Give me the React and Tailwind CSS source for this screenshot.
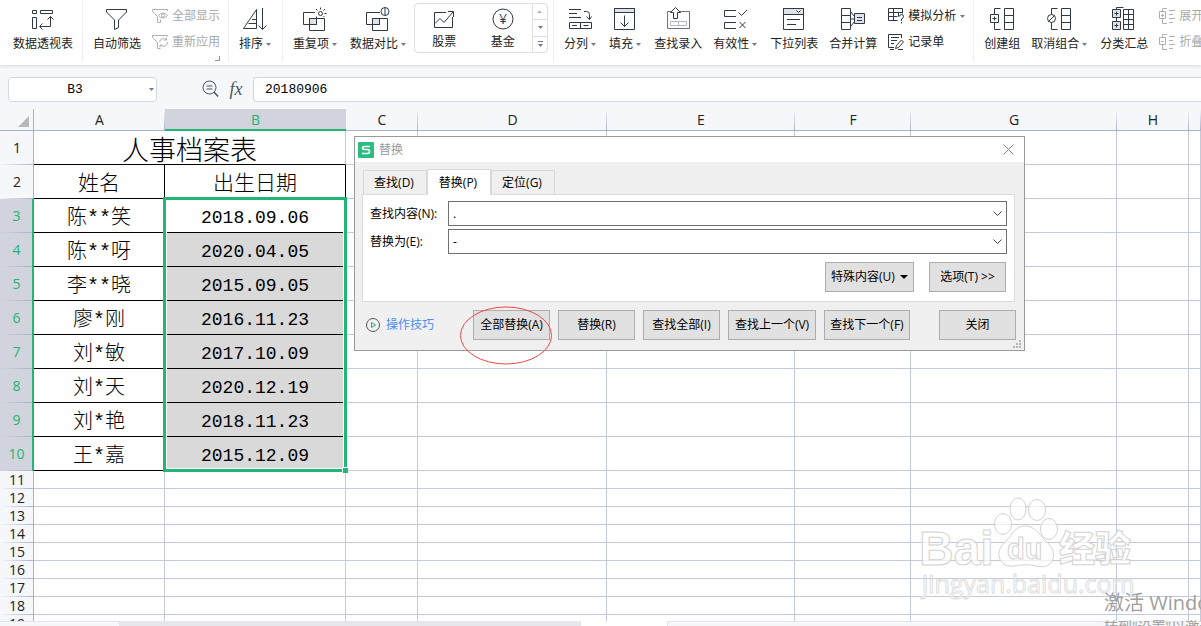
import React, { useState } from 'react';
import { clsx } from 'clsx';

const names = ["陈**笑", "陈**呀", "李**晓", "廖*刚", "刘*敏", "刘*天", "刘*艳", "王*嘉"]
const dates = ["2018.09.06", "2020.04.05", "2015.09.05", "2016.11.23", "2017.10.09", "2020.12.19", "2018.11.23", "2015.12.09"]
const smallRows = [11, 12, 13, 14, 15, 16, 17, 18, 19]
const columns = ["A", "B", "C", "D", "E", "F", "G", "H", ""]

// Icons

const Icon = ({ children, className }) => (
  <svg viewBox="0 0 24 24" className={clsx("h-6 w-6 shrink-0 fill-none stroke-[#2f3847]", className)} aria-hidden="true">{children}</svg>
)

const SmallIcon = ({ children, muted }) => (
  <svg viewBox="0 0 16 16" className={clsx("h-4 w-4 shrink-0 fill-none", muted ? "stroke-[#b0b0b0]" : "stroke-[#2f3847]")} aria-hidden="true">{children}</svg>
)

const Caret = () => (
  <svg viewBox="0 0 5 3" className="h-[3px] w-[5px] shrink-0 fill-[#6f7c98]" aria-hidden="true"><path d="M0 0h5L2.5 3z" /></svg>
)

const PivotIcon = () => (
  <Icon>
    <path d="M1.5 3.5h4v3h-4zM9.5 3.5h12v3h-12zM1.5 10.5h4v11h-4z" />
    <path d="M19.5 9.5v10H9M16.5 12.5l3-3 3 3M11.5 16.5l-3 3 3 3" />
  </Icon>
)

const FilterIcon = () => (
  <Icon><path d="M1.5 2.5h20V5l-8 8v7.5l-4 2V13l-8-8z" /></Icon>
)

const ShowAllIcon = () => (
  <SmallIcon muted>
    <path d="M15.5 3V1.5H.5v2l5 5v6h3v-3" />
    <path d="M6.500 7.500Q11 2.500 15.500 7.500Q11 12.500 6.500 7.500z" />
    <circle cx="11" cy="7.500" r="1.500" />
  </SmallIcon>
)

const ReapplyIcon = () => (
  <SmallIcon muted>
    <path d="M15.500 2.500v-1H.5v2l5 5v6h3" />
    <path d="M7.500 8a4 4 0 0 1 7-2M14.500 3.500V6H12M15.500 8a4 4 0 0 1-7 3M8 13.500V11h2.500" />
  </SmallIcon>
)

const SortIcon = () => (
  <Icon><path d="M13.500 2.500v19H.5zM9 12.500h4.500M5.500 16.500h8M19.500 1v21.500M15.500 18.500l4 4 4-4" /></Icon>
)

const DuplicateIcon = () => (
  <Icon>
    <path d="M6.500 11.500h7v6h-7z" className="fill-[#dfe2e7]" />
    <path d="M12 5.500H.5v12h13V9.500" />
    <path d="M16 11.500H6.500v12h15v-12z" />
    <circle cx="17.500" cy="6.500" r="2" />
    <path d="M17.500 2.500V.5M21.500 6.500h2M20.500 3.500l1.500-1.500M14.500 3.500L13 2M20.500 9l1 1" />
  </Icon>
)

const CompareIcon = () => (
  <Icon>
    <path d="M6.500 11.500h7v6h-7z" className="fill-[#dfe2e7]" />
    <path d="M14 5.500H.5v12h13v-6" />
    <path d="M6.500 11.500h15v12h-15z" />
    <circle cx="19" cy="4.500" r="4" /><path d="M19 .5v8" />
  </Icon>
)

const StockIcon = () => (
  <Icon><path d="M14 6.500H2.500v15h18V11M3 17.500l5-5 4 4L21 6M16 5.500h5.500V11" /></Icon>
)

const FundIcon = () => (
  <Icon>
    <circle cx="12" cy="13" r="10" />
    <text x="12" y="18" textAnchor="middle" className="fill-[#2f3847] stroke-none font-['Open_Sans',sans-serif] text-sm">¥</text>
  </Icon>
)

const SplitIcon = () => (
  <Icon>
    <path d="M1 2.500h12M1 6.500h8M1 10.500h12M16 4.500h2.500q3 0 3 3v5M18.500 9.500l3 3 2-3" />
    <path d="M1.500 15.500h22v6h-22zM12.500 15.500v6M4 18.500h5M15.500 18.500h5" />
  </Icon>
)

const FillIcon = () => (
  <Icon>
    <path d="M1.500 1.500h20v4h-20z" className="fill-[#dfe2e7]" />
    <path d="M1.500 1.500h20v21h-20zM11.500 8.500v11M7.500 15.500l4 4 4-4" />
  </Icon>
)

const LookupIcon = () => (
  <Icon className="stroke-[#6b7280]">
    <path d="M5 4.500H1.500v17h22v-17H14" />
    <path d="M4.500 14.500h16v4h-16zM12.500 14.500v4" className="stroke-[#b4b8c0]" />
    <path d="M7.500 11.500v-6h-3l5-5 5 5h-3v6z" className="fill-white stroke-[#2f3847]" />
  </Icon>
)

const ValidIcon = () => (
  <Icon><path d="M13 3.500H1.500v6H13M13 15.500H1.500v6H13M15.500 5.500l3 3 5.500-5.500M16.500 15l6 6M22.500 15l-6 6" /></Icon>
)

const DropListIcon = () => (
  <Icon>
    <path d="M1.500 1.500h20v6h-20z" className="fill-[#dfe2e7]" />
    <path d="M1.500 1.500h20v21h-20zM14.500 3.500l2 2 2-2M5 12.500h13M5 17.500h9" />
  </Icon>
)

const MergeIcon = () => (
  <Icon>
    <path d="M.5 1.500h9v21h-9zM.5 8.500h9M.5 15.500h9M9.500 4.500l4 5M9.500 12h4M9.500 19.500l4-5" />
    <path d="M13.500 6.500h10v10h-10z" className="fill-[#dfe2e7]" />
    <path d="M16 10.500h5M16 13.500h5" />
  </Icon>
)

const WhatIfIcon = () => (
  <SmallIcon>
    <path d="M9.500 12.500H.5V.5h14v5M.5 4.500h14M.5 8.500h9M5.500.5v12M10.500 4.500v4" />
    <path d="M11.500 8.500q0-2 2-2t2 2q0 1.500-2 2.500v2M13.500 14v1.500" />
  </SmallIcon>
)

const RecordIcon = () => (
  <SmallIcon>
    <path d="M13.500 4V.5H.5v13H6M3 3.500h8M3 6.500h6M3 9.500h3M2 15.500h4" />
    <path d="M7.500 14.500l1-3 5-5.500 2 2-5 5.500zM10 15.500h5" />
  </SmallIcon>
)

const GroupIcon = () => (
  <Icon>
    <path d="M10.500 1.500h-6v6M4.500 15.500v7h6M.5 7.500h8v8h-8zM2.500 11.500h4M4.500 9.500v4" />
    <path d="M14.500 1.500h9v21h-9zM14.500 8.500h9M14.500 15.500h9" />
  </Icon>
)

const UngroupIcon = () => (
  <Icon>
    <path d="M10.500 1.500h-6v6M4.500 15.500v7h6M1.500 14.500l6-6" />
    <circle cx="4.500" cy="11.500" r="4" />
    <path d="M14.500 1.500h9v21h-9zM14.500 8.500h9M14.500 15.500h9" />
  </Icon>
)

const SubtotalIcon = () => (
  <Icon>
    <path d="M4.500 2.500v-2h7M4.500 10.500v4" />
    <path d="M.5 2.500h8v8h-8zM.5 14.500h8v8h-8z" className="fill-[#dfe2e7]" />
    <path d="M2.500 6.500h4M4.500 4.500v4M2.500 18.500h4M4.500 16.500v4" />
    <path d="M11.500 2.500h10v20h-10zM16.500 2.500v20M11.500 7.500h10M11.500 12.500h10M11.500 17.500h10" />
  </Icon>
)

const OutlineIcon = ({ plus }) => (
  <SmallIcon muted>
    <path d="M8 .5H3.500v3M3.500 10.500v5H8M.5 3.500h6v7h-6zM2 7.500h3M10 2.500h6M10 6.500h4M10 10.500h6M10 14.500h4" />
    {plus && <path d="M3.500 6v3" />}
  </SmallIcon>
)

// Ribbon

const Group = ({ children }) => (
  <div className="flex shrink-0 border-r border-[#eceef1] pr-[3px] pl-[5px] first:pl-2 last:border-r-0">{children}</div>
)

const BigButton = ({ icon, label, caret }) => (
  <button type="button" className={clsx("flex shrink-0 flex-col items-center pt-1.5 pl-[5px]", caret ? "pr-2" : "pr-1.5")}>
    {icon}
    <span className="mt-[5px] flex items-center gap-[3px] leading-4 whitespace-nowrap">{label}{caret && <Caret />}</span>
  </button>
)

const RowButton = ({ icon, label, caret, muted }) => (
  <button type="button" className={clsx("flex items-center gap-1 leading-4 whitespace-nowrap", muted && "text-[#a9a9a9]")}>
    {icon}{label}{caret && <Caret />}
  </button>
)

const Ribbon = () => (
  <header className="flex h-[65px] shrink-0 overflow-hidden bg-white shadow-[0_1px_3px_#d5d8dd]">
    <div className="flex h-[62px] pt-px">
      <Group><BigButton icon={<PivotIcon />} label="数据透视表" /></Group>
      <Group>
        <BigButton icon={<FilterIcon />} label="自动筛选" />
        <div className="flex flex-col gap-2.5 px-[5px] pt-[7px]">
          <RowButton muted icon={<ShowAllIcon />} label="全部显示" />
          <RowButton muted icon={<ReapplyIcon />} label="重新应用" />
          <span className="-mt-1 h-[5px] w-[5px] self-end border-r border-b border-[#8a94a8]"></span>
        </div>
      </Group>
      <Group><BigButton icon={<SortIcon />} label="排序" caret /></Group>
      <Group>
        <BigButton icon={<DuplicateIcon />} label="重复项" caret />
        <BigButton icon={<CompareIcon />} label="数据对比" caret />
        <div className="mt-0.5 mr-0.5 flex h-[50px] w-[134px] rounded-sm border border-[#dcdfe4]">
          <button type="button" className="flex flex-1 flex-col items-center pt-0.5"><StockIcon /><span className="mt-1 leading-4">股票</span></button>
          <button type="button" className="flex flex-1 flex-col items-center pt-0.5"><FundIcon /><span className="mt-1 leading-4">基金</span></button>
          <div className="flex w-[15px] flex-col border-l border-[#dcdfe4]">
            <button type="button" aria-label="上一行" className="flex flex-1 rotate-180 items-center justify-center opacity-60"><Caret /></button>
            <button type="button" aria-label="下一行" className="flex flex-1 items-center justify-center border-y border-[#dcdfe4]"><Caret /></button>
            <button type="button" aria-label="更多" className="flex flex-1 flex-col items-center justify-center gap-0.5"><span className="h-px w-[5px] bg-[#6f7c98]"></span><Caret /></button>
          </div>
        </div>
      </Group>
      <Group>
        <BigButton icon={<SplitIcon />} label="分列" caret />
        <BigButton icon={<FillIcon />} label="填充" caret />
        <BigButton icon={<LookupIcon />} label="查找录入" />
        <BigButton icon={<ValidIcon />} label="有效性" caret />
        <BigButton icon={<DropListIcon />} label="下拉列表" />
        <BigButton icon={<MergeIcon />} label="合并计算" />
        <div className="flex flex-col gap-2.5 px-[5px] pt-[7px]">
          <RowButton icon={<WhatIfIcon />} label="模拟分析" caret />
          <RowButton icon={<RecordIcon />} label="记录单" />
        </div>
      </Group>
      <Group>
        <BigButton icon={<GroupIcon />} label="创建组" />
        <BigButton icon={<UngroupIcon />} label="取消组合" caret />
        <BigButton icon={<SubtotalIcon />} label="分类汇总" />
        <div className="flex flex-col gap-2.5 px-[5px] pt-[7px]">
          <RowButton muted icon={<OutlineIcon plus />} label="展开" />
          <RowButton muted icon={<OutlineIcon />} label="折叠" />
        </div>
      </Group>
    </div>
  </header>
)

const FormulaBar = () => {
  const [formula, setformula] = useState("20180906")
  return (
    <div className="flex h-11 shrink-0 items-center pt-1 pl-2">
      <div className="flex h-[25px] w-[149px] items-center rounded-sm border border-[#d5d8de] bg-white pr-0.5">
        <input aria-label="名称框" defaultValue="B3" className="w-0 flex-1 bg-transparent pt-0.5 pr-2 text-center font-['Liberation_Mono',monospace] text-[13px] text-black outline-none" />
        <Caret />
      </div>
      <svg viewBox="0 0 18 18" className="ml-11 h-[18px] w-[18px] shrink-0 fill-none stroke-[#4b5563]" aria-hidden="true">
        <circle cx="8.500" cy="7.500" r="6.500" /><path d="M5.500 6h6M5.500 9h6" /><path d="M13 12l4 4.500" strokeWidth="1.500" />
      </svg>
      <button type="button" className="w-[34px] text-center font-['Liberation_Serif',serif] text-lg leading-5 text-[#4b5563] italic">fx</button>
      <input aria-label="编辑栏" value={formula} onChange={(e) => setformula(e.target.value)} className="h-[25px] min-w-0 flex-1 rounded-l-sm border border-r-0 border-[#d5d8de] bg-white pl-[11px] font-['Liberation_Mono',monospace] text-[13px] text-black outline-none" />
    </div>
  )
}

// Sheet

const rowHead = "bg-[linear-gradient(to_right,transparent,#a9b2cc)] bg-[length:100%_1px] bg-bottom bg-no-repeat pl-px text-center font-['Open_Sans',sans-serif] text-sm leading-4 font-normal"

const RowHead = ({ n, selected }) => (
  <th scope="row" className={clsx(rowHead, selected ? "border-r-2 border-[#22b573] bg-[#d1d4dc] text-[#22b573]" : "border-r border-[#a9b2cc] bg-[#f5f7fa] text-[#222]")}>{n}</th>
)

const EmptyCells = ({ count }) => Array.from({ length: count }, (_, i) => (
  <td key={i} className="border-r border-b border-[#c3cadd]"></td>
))

const Sheet = () => (
  <table className="w-full table-fixed border-separate border-spacing-0 text-black">
    <colgroup>
      <col className="w-[34px]" />
      <col className="w-[131px]" />
      <col className="w-[181px]" />
      <col className="w-[72px]" />
      <col className="w-[189px]" />
      <col className="w-[188px]" />
      <col className="w-[116px]" />
      <col className="w-[206px]" />
      <col className="w-[72px]" />
      <col />
    </colgroup>
    <thead>
      <tr className="h-[22px] bg-[#f5f7fa] font-['Open_Sans',sans-serif] text-sm leading-4 text-[#222]">
        <td className="border-r border-b border-[#a9b2cc] pr-1">
          <svg viewBox="0 0 11 11" className="mt-1 ml-auto h-[11px] w-[11px] fill-[#b8b8b8]" aria-hidden="true"><path d="M11 0v11H0z" /></svg>
        </td>
        {columns.map((c) => (
          <th key={c} scope="col" className={clsx("font-normal", c === "B" ? "border-b-2 border-[#22b573] bg-[#d1d4dc] pt-px text-[#22b573]" : "border-b border-[#a9b2cc] bg-[linear-gradient(transparent,#a9b2cc)] bg-[length:1px_100%] bg-right bg-no-repeat")}>{c}</th>
        ))}
      </tr>
    </thead>
    <tbody>
      <tr className="h-[34px]">
        <RowHead n={1} />
        <td colSpan={2} className="border-r border-b border-r-[#c3cadd] border-b-black pt-1 text-center text-[27px] leading-7 font-light">人事档案表</td>
        <EmptyCells count={7} />
      </tr>
      <tr className="h-[34px]">
        <RowHead n={2} />
        <td className="border-r border-b border-black text-center text-[21px] leading-6 font-light">姓名</td>
        <td className="border-r border-b border-black text-center text-[21px] leading-6 font-light">出生日期</td>
        <EmptyCells count={7} />
      </tr>
      {names.map((name, i) => (
        <tr key={name} className="h-[34px]">
          <RowHead n={i + 3} selected />
          <td className="border-r border-b border-black pt-1.5 text-center font-['Liberation_Mono','Noto_Sans_CJK_SC',monospace] text-[20px] leading-6 font-light">{name}</td>
          <td className={clsx("border-r border-b border-black pt-1 text-center font-['Liberation_Mono',monospace] text-lg leading-6", i > 0 && "bg-[#d9d9d9]")}>{dates[i]}</td>
          <EmptyCells count={7} />
        </tr>
      ))}
      {smallRows.map((n) => (
        <tr key={n} className="h-[18px]">
          <RowHead n={n} />
          <EmptyCells count={9} />
        </tr>
      ))}
    </tbody>
  </table>
)

// Replace dialog

const DialogButton = ({ children, className }) => (
  <button type="button" className={clsx("flex h-[30px] shrink-0 items-center justify-center border border-[#adadad] bg-[#e1e1e1] whitespace-nowrap", className)}>{children}</button>
)

const Tab = ({ label, active, onClick }) => (
  <button type="button" role="tab" aria-selected={active} onClick={onClick} className={clsx("w-16 border border-[#d9d9d9] pr-0.5 text-center", active ? "z-10 -mb-px h-[26px] border-b-0 bg-white" : "h-6 border-b-0 bg-[#f0f0f0]")}>{label}</button>
)

const Field = ({ id, label, value, onChange }) => (
  <div className="flex items-center">
    <label htmlFor={id} className="w-[78px] shrink-0">{label}</label>
    <div className="flex h-[25px] flex-1 items-center border border-[#707070] bg-white">
      <input id={id} value={value} onChange={onChange} className="min-w-0 flex-1 px-1 outline-none" />
      <svg viewBox="0 0 9 5" className="mr-1 h-[5px] w-[9px] fill-none stroke-[#444]" aria-hidden="true"><path d="M.5 .5l4 4 4-4" /></svg>
    </div>
  </div>
)

const ReplaceDialog = () => {
  const [tab, settab] = useState("替换(P)")
  const [find, setfind] = useState(".")
  const [replace, setreplace] = useState("-")

  return (
    <section role="dialog" aria-label="替换" className="absolute top-[27px] left-[354px] z-20 w-[671px] border border-[#9a9a9a] bg-[#f0f0f0] text-black">
      <div className="flex h-[25px] items-center bg-white pr-2.5 pl-[3px]">
        <svg viewBox="0 0 16 16" className="h-4 w-4" aria-hidden="true">
          <rect width="16" height="16" rx="1" className="fill-[#2bbd80]" />
          <path d="M12 4.500H6.500q-2 0-2 1.500t2 1.500h3q2 0 2 2t-2 2H4" className="fill-none stroke-white" strokeWidth="1.500" />
        </svg>
        <h2 className="ml-[5px] flex-1 text-[#999]">替换</h2>
        <button type="button" aria-label="关闭窗口">
          <svg viewBox="0 0 11 11" className="h-[11px] w-[11px] stroke-[#888]" aria-hidden="true"><path d="M.5 .5l10 10M10.500 .5l-10 10" /></svg>
        </button>
      </div>
      <div className="pt-[7px] pr-[9px] pl-[7px]">
        <div role="tablist" className="flex items-end pl-px">
          {["查找(D)", "替换(P)", "定位(G)"].map((t) => (
            <Tab key={t} label={t} active={t === tab} onClick={() => settab(t)} />
          ))}
        </div>
        <div className="flex flex-col gap-[3px] border border-[#dcdcdc] bg-white pt-1.5 pr-[7px] pb-[9px] pl-[7px]">
          <Field id="find" label="查找内容(N):" value={find} onChange={(e) => setfind(e.target.value)} />
          <Field id="replace" label="替换为(E):" value={replace} onChange={(e) => setreplace(e.target.value)} />
          <div className="mt-[5px] flex justify-end gap-[15px] pr-px">
            <DialogButton className="w-[89px] gap-[5px]">特殊内容(U)<svg viewBox="0 0 8 4" className="h-1 w-2" aria-hidden="true"><path d="M0 0h8L4 4z" /></svg></DialogButton>
            <DialogButton className="w-[77px]">选项(T) &gt;&gt;</DialogButton>
          </div>
        </div>
      </div>
      <div className="flex items-center gap-2 pt-2 pr-2 pb-2.5 pl-[11px]">
        <a href="#tips" className="mr-auto flex items-center gap-1.5 text-[#4a90f0]">
          <svg viewBox="0 0 14 14" className="h-3.5 w-3.5 fill-none" aria-hidden="true">
            <circle cx="7" cy="7" r="6.500" className="stroke-[#555]" />
            <path d="M5.500 4.500v5l4-2.500z" className="stroke-[#22b573]" />
          </svg>
          操作技巧
        </a>
        <div className="relative">
          <DialogButton className="w-[77px]">全部替换(A)</DialogButton>
          <svg viewBox="0 0 92 59" className="pointer-events-none absolute -top-1 -left-[13px] h-[59px] w-[92px] max-w-none fill-none stroke-[#f04848]" aria-hidden="true"><ellipse cx="46" cy="29.500" rx="45.500" ry="28.500" /></svg>
        </div>
        <DialogButton className="w-[77px]">替换(R)</DialogButton>
        <DialogButton className="w-[77px]">查找全部(I)</DialogButton>
        <DialogButton className="w-[88px]">查找上一个(V)</DialogButton>
        <DialogButton className="w-[86px]">查找下一个(F)</DialogButton>
        <DialogButton className="ml-[21px] w-[77px]">关闭</DialogButton>
      </div>
      <svg viewBox="0 0 8 8" className="absolute right-[3px] bottom-0.5 h-2 w-2 fill-[#b5b5b5]" aria-hidden="true">
        <path d="M6 0h2v2H6zM3 3h2v2H3zM6 3h2v2H6zM0 6h2v2H0zM3 6h2v2H3zM6 6h2v2H6z" />
      </svg>
    </section>
  )
}

const Watermark = () => (
  <svg viewBox="0 0 230 115" className="pointer-events-none absolute right-14 bottom-[21px] h-[115px] w-[230px] fill-white/70 stroke-[#d2d2d2]" aria-hidden="true">
    <ellipse cx="103" cy="19" rx="8" ry="11" />
    <ellipse cx="122" cy="20" rx="8.500" ry="10.500" />
    <ellipse cx="88" cy="34" rx="8.500" ry="10.500" />
    <ellipse cx="134" cy="39" rx="8.500" ry="10.500" />
    <path d="M110 36c-10 0-12 8-18 14s-9 10-8 16c2 9 9 11 15 10s14-2 22 0c9 2 15 0 17-7c2-8-2-13-8-19s-10-14-20-14z" />
    <text x="4" y="75" className="font-['Liberation_Sans',sans-serif] text-[48px] font-bold">Bai</text>
    <text x="92" y="69" className="font-['Liberation_Sans',sans-serif] text-[29px] font-bold">du</text>
    <text x="144" y="72" className="font-['Noto_Sans_CJK_SC',sans-serif] text-[36px] font-black">经验</text>
    <text x="7" y="103" className="stroke-[#dedede] font-['Open_Sans',sans-serif] text-[25px]">jingyan.baidu.com</text>
  </svg>
)

const App = () => {
  return (
    <div className="relative flex h-screen flex-col overflow-hidden bg-[#f5f7fa] font-['Open_Sans','Noto_Sans_CJK_SC',sans-serif] text-xs text-[#222]">
      <Ribbon />
      <FormulaBar />
      <main className="relative min-h-0 flex-1 overflow-hidden bg-white">
        <Sheet />
        {/* selected range B3:B10 */}
        <div className="pointer-events-none absolute top-[88px] left-[163px] h-[275px] w-[184px] border-3 border-[#22b573] shadow-[inset_0_0_0_1px_white]">
          <span className="absolute -right-1 -bottom-1 h-1.5 w-1.5 border-t border-l border-white bg-[#22b573]"></span>
        </div>
        <ReplaceDialog />
      </main>
      <footer className="flex h-[5px] shrink-0 bg-white">
        <div className="w-[119px] border-t border-[#e4e6ec] bg-[#f5f7fa]"></div>
        <div className="w-[462px] bg-[#e6e7ec]"></div>
        <div className="ml-[86px] flex-1 border-t border-l border-[#e4e6ec] bg-[#f5f7fa]"></div>
      </footer>
      <Watermark />
      <div className="pointer-events-none absolute top-[589px] left-[1104px] whitespace-nowrap text-[#a0a0a0]">
        <p className="text-[20px] leading-7">激活 Windows</p>
        <p className="text-sm leading-5">转到"设置"以激活 Windows。</p>
      </div>
    </div>
  )
};

export default App;
